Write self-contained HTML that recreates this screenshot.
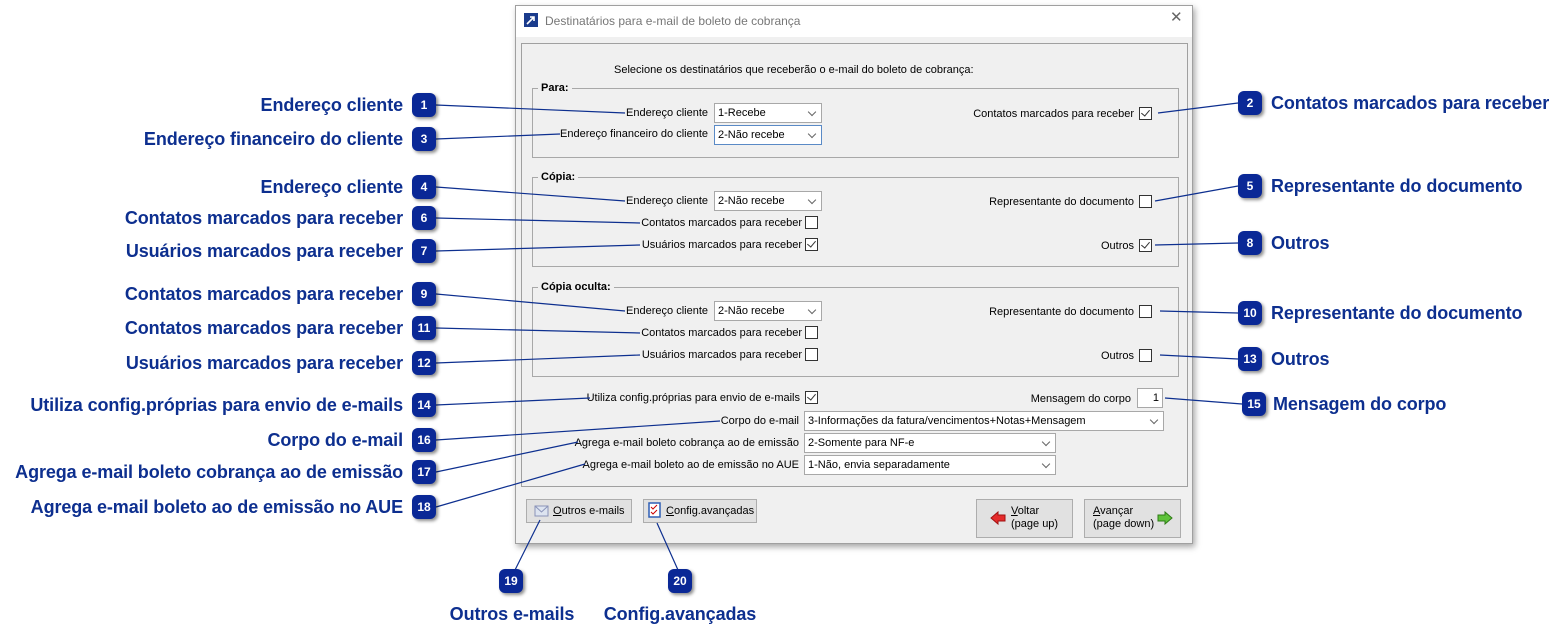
<!DOCTYPE html>
<html><head><meta charset="utf-8"><style>
body{margin:0;width:1566px;height:643px;background:#fff;position:relative;overflow:hidden;font-family:"Liberation Sans",sans-serif}
.a{position:absolute}
.dlg{left:515px;top:5px;width:676px;height:537px;background:#f0f0f0;border:1px solid #a0a0a0;box-shadow:2px 3px 6px rgba(0,0,0,.35)}
.tb{left:516px;top:6px;width:676px;height:31px;background:#fff}
.t{font-size:11px;color:#000;white-space:nowrap;line-height:13px}
.r{text-align:right}
.grp{border:1px solid #a8a8a8}
.lg{font-size:11px;font-weight:bold;background:#f0f0f0;padding:0 3px;line-height:13px}
.cb{width:11px;height:11px;border:1px solid #333;background:#fff}
.cb.k::after{content:"";position:absolute;left:3px;top:0px;width:4px;height:7px;border:solid #333;border-width:0 1px 1px 0;transform:rotate(40deg)}
.co{border:1px solid #a8a8a8;background:#fff;font-size:11px;line-height:18px;padding-left:3px;box-sizing:border-box;height:20px}
.co::after{content:"";position:absolute;right:6px;top:5px;width:5px;height:5px;border:solid #666;border-width:0 1px 1px 0;transform:rotate(45deg)}
.btn{border:1px solid #adadad;background:#e1e1e1;font-size:11px;box-sizing:border-box}
.bd{width:24px;height:24px;border-radius:6px;background:#0a2896;color:#fff;font:bold 12px/24px "Liberation Sans",sans-serif;text-align:center;box-shadow:2px 2px 3px rgba(0,0,0,.45)}
.lb{font:bold 18px/20px "Liberation Sans",sans-serif;color:#0d2f8f;white-space:nowrap;letter-spacing:-0.1px}
.L{right:1163px;text-align:right}
</style></head><body>
<div class="a dlg"></div>
<div class="a tb"></div>
<svg class="a" style="left:524px;top:13px" width="14" height="14"><rect width="14" height="14" fill="#1a3b8c"/><path d="M3 11 L10 4 M6 4 H10 V8" stroke="#fff" stroke-width="1.6" fill="none"/></svg>
<div class="a t" style="left:545px;top:15px;color:#777;font-size:12px">Destinatários para e-mail de boleto de cobrança</div>
<div class="a t" style="left:1170px;top:11px;color:#666;font-size:15px">✕</div>
<div class="a grp" style="left:521px;top:43px;width:665px;height:442px;border-color:#a0a0a0"></div>
<div class="a t" style="left:614px;top:64px">Selecione os destinatários que receberão o e-mail do boleto de cobrança:</div>

<div class="a grp" style="left:532px;top:88px;width:645px;height:68px"></div>
<div class="a lg" style="left:538px;top:82px">Para:</div>
<div class="a t r" style="right:858px;top:107px">Endereço cliente</div>
<div class="a co" style="left:714px;top:103px;width:108px">1-Recebe</div>
<div class="a t r" style="right:858px;top:128px">Endereço financeiro do cliente</div>
<div class="a co" style="left:714px;top:125px;width:108px;border-color:#5a8ac6">2-Não recebe</div>
<div class="a t r" style="right:432px;top:108px">Contatos marcados para receber</div>
<div class="a cb k" style="left:1139px;top:107px"></div>

<div class="a grp" style="left:532px;top:177px;width:645px;height:88px"></div>
<div class="a lg" style="left:538px;top:171px">Cópia:</div>
<div class="a t r" style="right:858px;top:195px">Endereço cliente</div>
<div class="a co" style="left:714px;top:191px;width:108px">2-Não recebe</div>
<div class="a t r" style="right:764px;top:217px">Contatos marcados para receber</div>
<div class="a cb" style="left:805px;top:216px"></div>
<div class="a t r" style="right:764px;top:239px">Usuários marcados para receber</div>
<div class="a cb k" style="left:805px;top:238px"></div>
<div class="a t r" style="right:432px;top:196px">Representante do documento</div>
<div class="a cb" style="left:1139px;top:195px"></div>
<div class="a t r" style="right:432px;top:240px">Outros</div>
<div class="a cb k" style="left:1139px;top:239px"></div>

<div class="a grp" style="left:532px;top:287px;width:645px;height:88px"></div>
<div class="a lg" style="left:538px;top:281px">Cópia oculta:</div>
<div class="a t r" style="right:858px;top:305px">Endereço cliente</div>
<div class="a co" style="left:714px;top:301px;width:108px">2-Não recebe</div>
<div class="a t r" style="right:764px;top:327px">Contatos marcados para receber</div>
<div class="a cb" style="left:805px;top:326px"></div>
<div class="a t r" style="right:764px;top:349px">Usuários marcados para receber</div>
<div class="a cb" style="left:805px;top:348px"></div>
<div class="a t r" style="right:432px;top:306px">Representante do documento</div>
<div class="a cb" style="left:1139px;top:305px"></div>
<div class="a t r" style="right:432px;top:350px">Outros</div>
<div class="a cb" style="left:1139px;top:349px"></div>

<div class="a t r" style="right:766px;top:392px">Utiliza config.próprias para envio de e-mails</div>
<div class="a cb k" style="left:805px;top:391px"></div>
<div class="a t r" style="right:435px;top:393px">Mensagem do corpo</div>
<div class="a" style="left:1137px;top:388px;width:26px;height:20px;border:1px solid #a8a8a8;background:#fff;box-sizing:border-box;font-size:11px;text-align:right;line-height:18px;padding-right:3px">1</div>
<div class="a t r" style="right:767px;top:415px">Corpo do e-mail</div>
<div class="a co" style="left:804px;top:411px;width:360px">3-Informações da fatura/vencimentos+Notas+Mensagem</div>
<div class="a t r" style="right:767px;top:437px">Agrega e-mail boleto cobrança ao de emissão</div>
<div class="a co" style="left:804px;top:433px;width:252px">2-Somente para NF-e</div>
<div class="a t r" style="right:767px;top:459px">Agrega e-mail boleto ao de emissão no AUE</div>
<div class="a co" style="left:804px;top:455px;width:252px">1-Não, envia separadamente</div>

<div class="a btn" style="left:526px;top:499px;width:106px;height:24px;padding:5px 0 0 26px"><u>O</u>utros e-mails</div>
<svg class="a" style="left:534px;top:504px" width="15" height="13"><rect x="1" y="2" width="13" height="10" fill="#dde4f0" stroke="#8a93b8"/><path d="M1 2 L7.5 8 L14 2" stroke="#8a93b8" fill="none"/></svg>
<div class="a btn" style="left:643px;top:499px;width:114px;height:24px;padding:5px 0 0 22px"><u>C</u>onfig.avançadas</div>
<svg class="a" style="left:648px;top:502px" width="13" height="16"><rect x="1" y="1" width="11" height="14" fill="#fff" stroke="#2f5fb5" stroke-width="1.5"/><path d="M3 5 L5 7 L9 3 M3 10 L5 12 L9 8" stroke="#c00" fill="none"/></svg>
<div class="a btn" style="left:976px;top:499px;width:97px;height:39px;padding:5px 0 0 34px;line-height:13px"><u>V</u>oltar<br>(page up)</div>
<svg class="a" style="left:990px;top:511px" width="16" height="14"><path d="M1 7 L8 1 V4 H15 V10 H8 V13 Z" fill="#e52b2b" stroke="#a01010"/></svg>
<div class="a btn" style="left:1084px;top:499px;width:97px;height:39px;padding:5px 0 0 8px;line-height:13px"><u>A</u>vançar<br>(page down)</div>
<svg class="a" style="left:1157px;top:511px" width="16" height="14"><path d="M15 7 L8 1 V4 H1 V10 H8 V13 Z" fill="#5ec23a" stroke="#2e7a16"/></svg>

<svg class="a" style="left:0;top:0" width="1566" height="643">
<g stroke="#0d2f8f" stroke-width="1.2" fill="none">
<path d="M436 105 L625 113"/><path d="M436 139 L560 134"/><path d="M436 187 L625 201"/><path d="M436 218 L640 223"/><path d="M436 251 L640 245"/><path d="M436 294 L625 311"/><path d="M436 328 L640 333"/><path d="M436 363 L640 355"/><path d="M436 405 L590 398"/><path d="M436 440 L720 421"/><path d="M436 472 L578 442"/><path d="M436 507 L585 464"/>
<path d="M1158 113 L1238 103"/><path d="M1155 201 L1238 186"/><path d="M1155 245 L1238 243"/><path d="M1160 311 L1238 313"/><path d="M1160 355 L1238 359"/><path d="M1165 398 L1242 404"/>
<path d="M540 520 L515 570"/><path d="M657 523 L678 570"/>
</g></svg>

<div class="a lb L" style="top:95px">Endereço cliente</div><div class="a bd" style="left:412px;top:93px">1</div>
<div class="a lb L" style="top:129px">Endereço financeiro do cliente</div><div class="a bd" style="left:412px;top:127px">3</div>
<div class="a lb L" style="top:177px">Endereço cliente</div><div class="a bd" style="left:412px;top:175px">4</div>
<div class="a lb L" style="top:208px">Contatos marcados para receber</div><div class="a bd" style="left:412px;top:206px">6</div>
<div class="a lb L" style="top:241px">Usuários marcados para receber</div><div class="a bd" style="left:412px;top:239px">7</div>
<div class="a lb L" style="top:284px">Contatos marcados para receber</div><div class="a bd" style="left:412px;top:282px">9</div>
<div class="a lb L" style="top:318px">Contatos marcados para receber</div><div class="a bd" style="left:412px;top:316px">11</div>
<div class="a lb L" style="top:353px">Usuários marcados para receber</div><div class="a bd" style="left:412px;top:351px">12</div>
<div class="a lb L" style="top:395px">Utiliza config.próprias para envio de e-mails</div><div class="a bd" style="left:412px;top:393px">14</div>
<div class="a lb L" style="top:430px">Corpo do e-mail</div><div class="a bd" style="left:412px;top:428px">16</div>
<div class="a lb L" style="top:462px">Agrega e-mail boleto cobrança ao de emissão</div><div class="a bd" style="left:412px;top:460px">17</div>
<div class="a lb L" style="top:497px">Agrega e-mail boleto ao de emissão no AUE</div><div class="a bd" style="left:412px;top:495px">18</div>

<div class="a bd" style="left:1238px;top:91px">2</div><div class="a lb" style="left:1271px;top:93px">Contatos marcados para receber</div>
<div class="a bd" style="left:1238px;top:174px">5</div><div class="a lb" style="left:1271px;top:176px">Representante do documento</div>
<div class="a bd" style="left:1238px;top:231px">8</div><div class="a lb" style="left:1271px;top:233px">Outros</div>
<div class="a bd" style="left:1238px;top:301px">10</div><div class="a lb" style="left:1271px;top:303px">Representante do documento</div>
<div class="a bd" style="left:1238px;top:347px">13</div><div class="a lb" style="left:1271px;top:349px">Outros</div>
<div class="a bd" style="left:1242px;top:392px">15</div><div class="a lb" style="left:1273px;top:394px">Mensagem do corpo</div>

<div class="a bd" style="left:499px;top:569px">19</div><div class="a lb" style="left:412px;top:604px;width:200px;text-align:center">Outros e-mails</div>
<div class="a bd" style="left:668px;top:569px">20</div><div class="a lb" style="left:580px;top:604px;width:200px;text-align:center">Config.avançadas</div>
</body></html>
